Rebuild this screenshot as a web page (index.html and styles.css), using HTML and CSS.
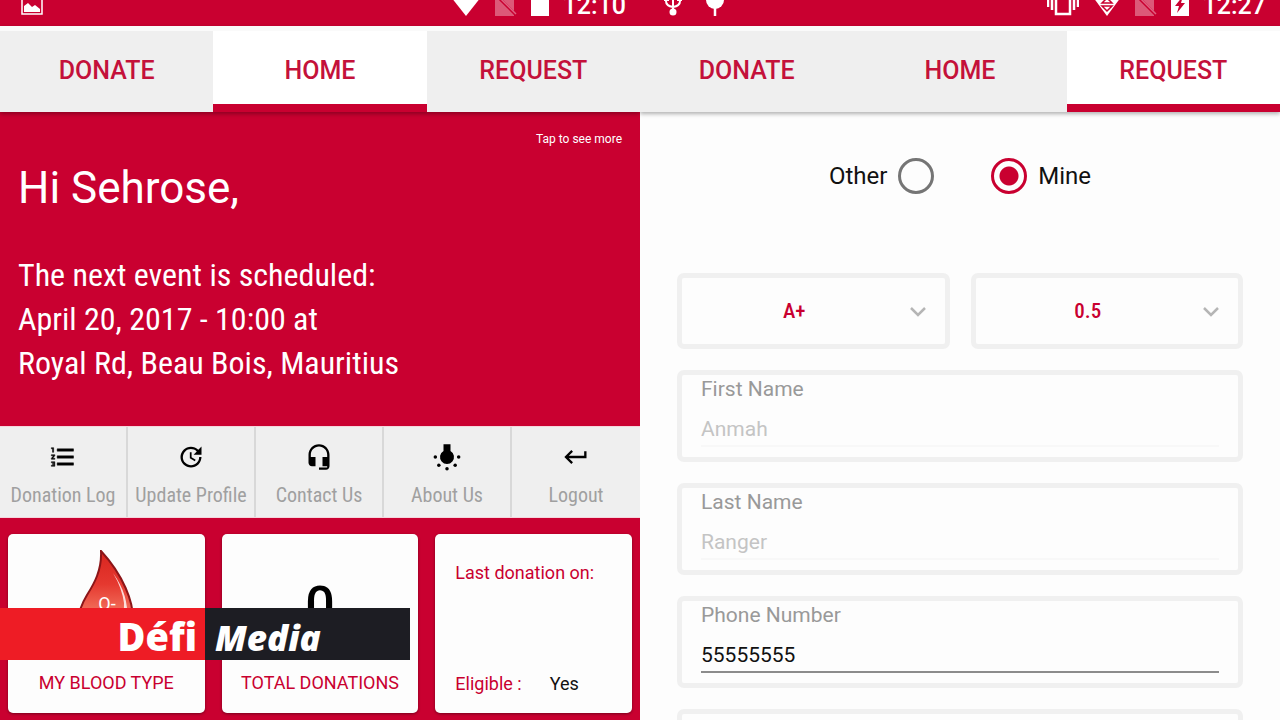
FILE: index.html
```html
<!DOCTYPE html>
<html lang="en">
<head>
    <meta charset="UTF-8">
    <meta name="viewport" content="width=device-width, initial-scale=1.0">
    <title>Blood Donation App</title>
    <link rel="stylesheet" href="styles.css">
</head>
<body>

<!-- Home -->
<main class="screen">
    <div class="status-bar">
        <svg class="status-icon status-left" width="22" height="24" viewBox="0 0 22 24"><path d="M1 1h20v21H1z" fill="none" stroke="#fff" stroke-width="1.500"/><path d="M3 20v-6l4-3 4 4 3-2 5 4v3z" fill="#fff"/></svg>
        <svg class="status-icon" width="30" height="26" viewBox="0 0 30 26"><path d="M0 7Q15-6 30 7L15 26z" fill="#fff"/></svg>
        <svg class="status-icon" width="22" height="26" viewBox="0 0 22 26"><path d="M0 0h19v26H0z" fill="#fff" opacity=".35"/><path d="M0 4l21 21" stroke="#c90030" stroke-width="3"/><path d="M3 6l18 18" stroke="#e06080" stroke-width="1.500"/></svg>
        <svg class="status-icon" width="18" height="26" viewBox="0 0 18 26"><path d="M0 2h5V0h8v2h5v24H0z" fill="#fff"/></svg>
        <span class="status-time">12:10</span>
    </div>

    <nav class="tabs">
        <a class="tab" href="#donate">DONATE</a>
        <a class="tab active" href="#home">HOME</a>
        <a class="tab" href="#request">REQUEST</a>
    </nav>

    <section class="hero">
        <a class="hero-more" href="#events">Tap to see more</a>
        <h1>Hi Sehrose,</h1>
        <p>The next event is scheduled:<br>April 20, 2017 - 10:00 at<br>Royal Rd, Beau Bois, Mauritius</p>
    </section>

    <div class="menu">
        <button class="menu-item">
            <svg width="28" height="28" viewBox="0 0 24 24"><path d="M2 17h2v.5H3v1h1v.5H2v1h3v-4H2v1zm1-9h1V4H2v1h1v3zm-1 3h1.800L2 13.100v.9h3v-1H3.200L5 10.900V10H2v1zm5-6v2h14V5H7zm0 14h14v-2H7v2zm0-6h14v-2H7v2z" stroke="#000" stroke-width=".4"/></svg>
            Donation Log
        </button>
        <button class="menu-item">
            <svg width="28" height="28" viewBox="0 0 24 24"><path d="M21 10.120h-6.780l2.740-2.820c-2.730-2.700-7.150-2.800-9.880-.1-2.730 2.710-2.730 7.080 0 9.790s7.150 2.710 9.880 0C18.320 15.650 19 14.080 19 12.100h2c0 1.980-.88 4.550-2.640 6.290-3.510 3.480-9.210 3.480-12.720 0-3.500-3.470-3.530-9.110-.02-12.580s9.140-3.470 12.650 0L21 3v7.120zM12.500 8v4.250l3.500 2.080-.72 1.210L11 13V8h1.500z"/></svg>
            Update Profile
        </button>
        <button class="menu-item">
            <svg width="28" height="28" viewBox="0 0 24 24"><path d="M12 1c-4.970 0-9 4.030-9 9v7c0 1.660 1.340 3 3 3h3v-8H5v-2c0-3.870 3.130-7 7-7s7 3.130 7 7v2h-4v8h4v1h-7v2h6c1.660 0 3-1.340 3-3V10c0-4.970-4.030-9-9-9z"/></svg>
            Contact Us
        </button>
        <button class="menu-item">
            <svg width="28" height="28" viewBox="0 0 24 24"><path d="M9 1h6v5.800a6 6 0 1 1-6 0z"/><circle cx="2" cy="12" r="1.500"/><circle cx="22" cy="12" r="1.500"/><circle cx="5" cy="19" r="1.500"/><circle cx="19" cy="19" r="1.500"/><circle cx="12" cy="22" r="1.500"/></svg>
            About Us
        </button>
        <button class="menu-item">
            <svg width="28" height="28" viewBox="0 0 24 24"><path d="M19 7v4H5.830l3.580-3.590L8 6l-6 6 6 6 1.410-1.410L5.830 13H21V7z"/></svg>
            Logout
        </button>
    </div>

    <section class="cards">
        <article class="card">
            <svg class="drop" width="64" height="96" viewBox="0 0 64 96">
                <defs>
                    <linearGradient id="blood" x1="0" y1="0" x2="0" y2="1">
                        <stop offset="0" stop-color="#d8251f"/>
                        <stop offset=".35" stop-color="#e5382f"/>
                        <stop offset=".65" stop-color="#f2705c"/>
                        <stop offset="1" stop-color="#c31818"/>
                    </linearGradient>
                </defs>
                <path d="M27 1C28 20 20 34 13 45C7 55 3 65 5 75C8 88 18 95 31 95C46 95 58 86 59 72C60 52 49 25 27 1z" fill="url(#blood)" stroke="#8c1518" stroke-width="2"/>
                <path d="M39 23Q55 45 53 69Q50 82 42 88Q51 70 50 53Q48 38 39 23z" fill="#fff" opacity=".8"/>
                <text x="33" y="60" text-anchor="middle" font-size="18" fill="#fff">O-</text>
            </svg>
            <h2>MY BLOOD TYPE</h2>
        </article>
        <article class="card">
            <div class="total">0</div>
            <h2>TOTAL DONATIONS</h2>
        </article>
        <article class="card card-last">
            <div>Last donation on:</div>
            <div class="eligible"><span>Eligible :</span><span class="answer">Yes</span></div>
        </article>
    </section>
</main>

<!-- Request -->
<section class="screen screen-request">
    <div class="status-bar">
        <svg class="status-icon" width="18" height="26" viewBox="0 0 18 26"><path d="M9 0v22M2 8v3q0 5 7 6q7-1 7-6V8" fill="none" stroke="#fff" stroke-width="2"/><path d="M0 6h5v5H0zM13 6h5v5h-5z" fill="#fff"/><circle cx="9" cy="22" r="3.500" fill="#fff"/></svg>
        <svg class="status-icon status-left" width="20" height="26" viewBox="0 0 20 26"><circle cx="10" cy="10" r="9" fill="#fff"/><path d="M10 16v10" stroke="#fff" stroke-width="2.500"/></svg>
        <svg class="status-icon" width="32" height="26" viewBox="0 0 32 26"><path d="M9 0h14v24H9zM5 2v18M1 5v12M27 2v18M31 5v12" fill="none" stroke="#fff" stroke-width="2.500"/></svg>
        <svg class="status-icon" width="28" height="26" viewBox="0 0 28 26"><path d="M0 7Q14-6 28 7L14 26z" fill="#fff"/><path d="M9 13l5-5 5 5zM9 16h10l-5 5z" fill="none" stroke="#c90030" stroke-width="1.500"/></svg>
        <svg class="status-icon" width="22" height="26" viewBox="0 0 22 26"><path d="M0 0h19v26H0z" fill="#fff" opacity=".35"/><path d="M0 4l21 21" stroke="#c90030" stroke-width="3"/><path d="M3 6l18 18" stroke="#e06080" stroke-width="1.500"/></svg>
        <svg class="status-icon" width="18" height="26" viewBox="0 0 18 26"><path d="M0 2h5V0h8v2h5v24H0z" fill="#fff"/><path d="M12 6l-8 10h4l-2 7 8-10h-4z" fill="#c90030"/></svg>
        <span class="status-time">12:27</span>
    </div>

    <nav class="tabs">
        <a class="tab" href="#donate">DONATE</a>
        <a class="tab" href="#home">HOME</a>
        <a class="tab active" href="#request">REQUEST</a>
    </nav>

    <form class="request-form">
        <div class="radio-row">
            <label class="radio-item">Other <input type="radio" name="who" value="other"></label>
            <label class="radio-item"><input type="radio" name="who" value="mine" checked> Mine</label>
        </div>

        <div class="select-row">
            <div class="select-box">
                <select aria-label="Blood type">
                    <option>A+</option>
                    <option>O-</option>
                </select>
                <svg class="chevron" width="16" height="10" viewBox="0 0 16 10"><path d="M1 1l7 7 7-7" fill="none" stroke="#b5b5b5" stroke-width="2.500"/></svg>
            </div>
            <div class="select-box">
                <select aria-label="Amount">
                    <option>0.5</option>
                    <option>1.0</option>
                </select>
                <svg class="chevron" width="16" height="10" viewBox="0 0 16 10"><path d="M1 1l7 7 7-7" fill="none" stroke="#b5b5b5" stroke-width="2.500"/></svg>
            </div>
        </div>

        <div class="field">
            <label for="first">First Name</label>
            <input type="text" id="first" value="Anmah" disabled>
        </div>
        <div class="field">
            <label for="last">Last Name</label>
            <input type="text" id="last" value="Ranger" disabled>
        </div>
        <div class="field">
            <label for="phone">Phone Number</label>
            <input type="tel" id="phone" value="55555555">
        </div>
        <div class="field">
            <label for="address">Address</label>
            <input type="text" id="address">
        </div>
    </form>
</section>

<div class="brand"><span class="brand-defi">Défi</span><span class="brand-media">Media</span></div>

</body>
</html>
```
FILE: styles.css
```css
* { box-sizing: border-box; }
body { margin: 0; height: 100vh; display: flex; overflow: hidden; position: relative; font-family: "Roboto Condensed", Roboto, sans-serif; background: #fdfdfd; }
h1, h2, p { margin: 0; font-weight: 400; }

.screen { flex: 1; min-width: 0; display: flex; flex-direction: column; overflow: hidden; background: #c90030; }
.screen-request { background: #fdfdfd; }

/* status bar */
.status-bar { height: 26px; flex: none; display: flex; align-items: flex-end; gap: 14px; padding: 0 14px 10px 21px; background: #c90030; }
.screen-request .status-bar { padding-left: 24px; }
.status-icon { flex: none; }
.status-icon + .status-left { margin-left: 9px; }
.status-left { margin-right: auto; }
.status-time { font: 500 25px/20px Roboto, sans-serif; color: #fff; }

/* tabs */
.tabs { height: 86px; flex: none; display: flex; border-top: 5px solid #fafafa; background: #efefef; box-shadow: 0 2px 4px rgba(0,0,0,0.3); position: relative; }
.tab { flex: 1; display: flex; align-items: center; justify-content: center; padding-top: 6px; border-bottom: 8px solid #efefef; font: 500 25px/30px Roboto, sans-serif; color: #c4113a; text-decoration: none; }
.tab.active { background: #fff; border-bottom-color: #c90030; }

/* hero */
.hero { height: 314px; flex: none; display: flex; flex-direction: column; padding: 18px; color: #fff; }
.hero-more { align-self: flex-end; font: 12px/18px Roboto, sans-serif; color: #fff; text-decoration: none; }
.hero h1 { margin: 12px 0 37px; font: 44px/56px Roboto, sans-serif; }
.hero p { font-size: 32px; line-height: 44px; }

/* menu */
.menu { height: 92px; flex: none; display: grid; grid-template-columns: repeat(5, 1fr); border-top: 1px solid #f5d5dc; border-bottom: 1px solid #f5d5dc; background: #efefef; }
.menu-item { display: flex; flex-direction: column; align-items: center; gap: 12px; padding: 16px 0 0; border: 0; border-right: 2px solid #d8d8d8; background: none; font: inherit; font-size: 20px; line-height: 24px; color: #a0a0a0; white-space: nowrap; cursor: pointer; }
.menu-item:last-child { border-right: 0; }
.menu-item svg { fill: #000; }

/* cards */
.cards { flex: 1; display: grid; grid-template-columns: repeat(3, 1fr); gap: 17px; padding: 16px 8px 7px; }
.card { display: flex; flex-direction: column; align-items: center; justify-content: space-between; padding: 16px 0 18px; border-radius: 5px; background: #fdfdfd; box-shadow: 0 1px 3px rgba(0,0,0,0.4); font: 18px/24px Roboto, sans-serif; color: #c90030; }
.card h2 { font-size: 18px; line-height: 24px; }
.total { padding-top: 26px; font-size: 52px; font-weight: 500; line-height: 60px; color: #000; }
.card-last { align-items: stretch; padding: 27px 20px 17px; }
.eligible { display: flex; gap: 28px; }
.answer { color: #111; }

/* request form */
.request-form { display: flex; flex-direction: column; gap: 21px; padding: 45px 37px 0; font-family: Roboto, sans-serif; }
.radio-row { display: flex; justify-content: center; gap: 57px; margin-bottom: 57px; }
.radio-item { display: flex; align-items: center; gap: 11px; font-size: 24px; line-height: 38px; color: #111; }
.radio-item input { appearance: none; width: 36px; height: 36px; margin: 0; border: 3px solid #757575; border-radius: 50%; }
.radio-item input:checked { border-color: #c90030; background: radial-gradient(circle, #c90030 9px, transparent 10px); }

.select-row { display: flex; gap: 21px; }
.select-box { flex: 1; position: relative; }
.select-box select { appearance: none; display: block; width: 100%; height: 76px; padding: 0 38px 0 0; border: 5px solid #f0f0f0; border-radius: 7px; background: #fdfdfd; font: 500 21px/28px "Roboto Condensed", Roboto, sans-serif; color: #c90030; text-align: center; text-align-last: center; }
.chevron { position: absolute; right: 24px; top: 34px; pointer-events: none; }

.field { height: 92px; flex: none; display: flex; flex-direction: column; padding: 0 19px; border: 5px solid #f0f0f0; border-radius: 7px; }
.field label { font-size: 21px; line-height: 28px; color: #999; }
.field input { width: 100%; height: 44px; padding: 10px 0 0; border: 0; border-bottom: 2px solid #8c8c8c; background: none; font: 21px/28px Roboto, sans-serif; color: #111; outline: none; }
.field input:disabled { color: #c4c4c4; border-bottom-color: #f8f8f8; }

/* brand strip over the cards */
.brand { position: absolute; left: 0; bottom: 60px; display: flex; font-family: "Open Sans", sans-serif; font-weight: 800; line-height: 52px; color: #fff; }
.brand-defi { width: 205px; height: 52px; padding: 2px 8px 0 0; background: #ee1c25; font-size: 38px; text-align: right; }
.brand-media { width: 205px; height: 52px; padding: 4px 0 0 10px; background: #1d1d23; font-size: 35px; font-style: italic; }
```
